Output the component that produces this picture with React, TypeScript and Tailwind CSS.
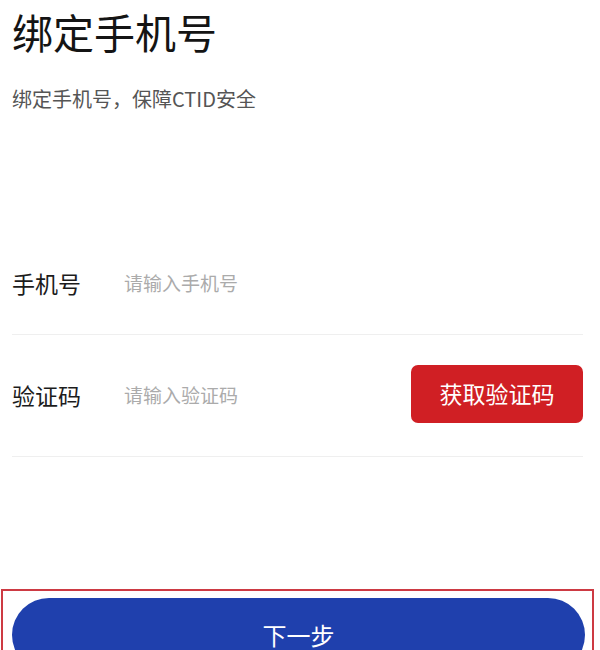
const font = { fontFamily: '"Noto Sans CJK SC", "Noto Sans", sans-serif' };

export default function App() {
  return (
    <div
      className="flex h-[650px] w-[600px] flex-col overflow-hidden bg-white"
      style={font}
    >
      {/* 标题 */}
      <div className="px-3 pt-[7px]">
        <h1 className="text-[41px] leading-[48px] font-normal text-[#141414]">
          绑定手机号
        </h1>
        <p className="mt-[30px] text-[20px] leading-[28px] text-[#555]">
          绑定手机号，保障CTID安全
        </p>
      </div>

      {/* 表单 */}
      <div className="mt-[121px] pl-3 pr-[17px]">
        <div className="flex h-[101px] items-center border-b border-[#efefef] pb-[2px]">
          <span className="w-[112px] text-[23px] text-[#1c1c1c]">手机号</span>
          <input
            className="flex-1 bg-transparent text-[19px] outline-none placeholder:text-[#ababab]"
            placeholder="请输入手机号"
          />
        </div>
        <div className="flex h-[122px] items-center border-b border-[#efefef]">
          <span className="w-[112px] text-[23px] text-[#1c1c1c]">验证码</span>
          <input
            className="min-w-0 flex-1 bg-transparent text-[19px] outline-none placeholder:text-[#ababab]"
            placeholder="请输入验证码"
          />
          <button className="mb-[4px] flex h-[58px] w-[172px] items-center justify-center rounded-[7px] bg-[#d01f24] text-[23px] text-white">
            获取验证码
          </button>
        </div>
      </div>

      <div className="flex-1" />

      {/* 下一步 */}
      <div className="ml-px mr-[6px] h-[61px] shrink-0 border-2 border-b-0 border-[#cd3a43] pl-[9px] pr-[7px] pt-[7px]">
        <button className="flex h-[74px] w-full items-center justify-center rounded-full bg-[#1f40ad] text-[24px] leading-none text-white">
          下一步
        </button>
      </div>
    </div>
  );
}
